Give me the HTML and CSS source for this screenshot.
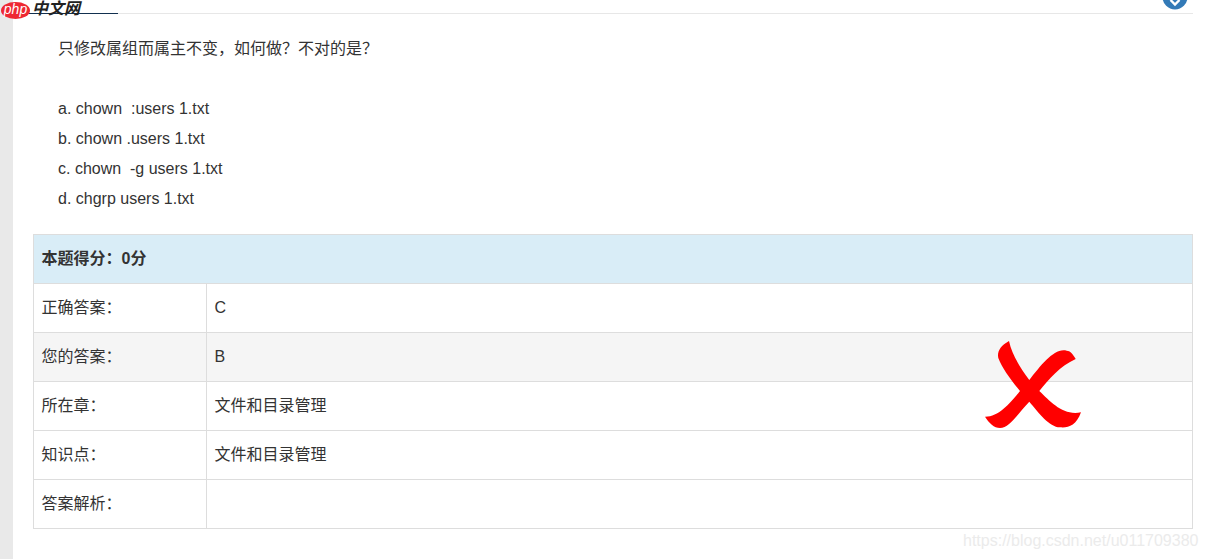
FILE: index.html
```html
<!DOCTYPE html>
<html>
<head>
    <meta charset="utf-8">
    <link rel="stylesheet" href="styles.css">
</head>
<body>
    <div class="page">
        <div class="side"></div>
        <div class="main">
            <div class="tabs">
                <div class="tab"></div>
            </div>
            <div class="question">
                <p>只修改属组而属主不变，如何做？不对的是？</p>
                <p>&nbsp;</p>
                <p>a. chown &nbsp;:users 1.txt</p>
                <p>b. chown .users 1.txt</p>
                <p>c. chown &nbsp;-g users 1.txt</p>
                <p>d. chgrp users 1.txt</p>
            </div>
            <table class="result">
                <colgroup>
                    <col class="label-col">
                    <col>
                </colgroup>
                <tr class="score">
                    <th colspan="2">本题得分：0分</th>
                </tr>
                <tr>
                    <td>正确答案：</td>
                    <td>C</td>
                </tr>
                <tr class="alt">
                    <td>您的答案：</td>
                    <td>B</td>
                </tr>
                <tr>
                    <td>所在章：</td>
                    <td>文件和目录管理</td>
                </tr>
                <tr>
                    <td>知识点：</td>
                    <td>文件和目录管理</td>
                </tr>
                <tr>
                    <td>答案解析：</td>
                    <td></td>
                </tr>
            </table>
        </div>
    </div>

    <div class="logo">
        <span class="logo-php">php</span>
        <span class="logo-name">中文网</span>
    </div>

    <svg class="top-badge" width="26" height="12" viewBox="0 0 26 12">
        <circle cx="13" cy="-3" r="12.5" fill="#337ab7"/>
        <path d="M8.500 0 L13 4.500 L17.500 0" fill="none" stroke="#fff" stroke-width="2.400"/>
    </svg>

    <svg class="wrong-mark" width="97" height="88" viewBox="0 0 97 88">
        <path fill="#f00" d="M24 0 C15 5 12 11 13.300 17 C17 27 26 39 35 50 C26 61 14 76 0 75.700 C4 82 9 87 15 87 C25 87 34 71 44.300 60.700 C54 72 64 86 75 86.300 C83 87 91 85 96 71.300 C78 75 66 61 54.300 50 C64 38 75 25 90.700 18 C88 13 85 9.700 81.700 9.700 C70 6 56 24 44.300 39 C36 28 27 14 24 0 Z"/>
    </svg>

    <div class="watermark">https://blog.csdn.net/u011709380</div>
</body>
</html>
```

FILE: styles.css
```css
html, body
{
    margin: 0;
    height: 100%;
    overflow: hidden;
    background-color: #fff;
}
body
{
    font-family: "Liberation Sans", "Noto Sans CJK SC", sans-serif;
    font-size: 16px;
    color: #333;
}
.page
{
    display: flex;
    height: 559px;
}
.side
{
    width: 13px;
    flex-shrink: 0;
    background-color: #e9e9e9;
}
.main
{
    width: 1180px;
}
.tabs
{
    height: 13px;
    border-bottom: 1px solid #e7e7e7;
}
.tab
{
    width: 90px;
    height: 13px;
    margin-left: 15px;
    border-bottom: 1px solid #12304f;
}
.question
{
    padding: 20px 0 20px 45px;
}
.question p
{
    margin: 0;
    line-height: 30px;
}
.result
{
    border-collapse: collapse;
    width: 1160px;
    margin-left: 20px;
    table-layout: fixed;
}
.label-col
{
    width: 173px;
}
.result th, .result td
{
    height: 49px;
    padding: 0 8px 0 7.500px;
    border: 1px solid #ddd;
    text-align: left;
    line-height: 20px;
    box-sizing: border-box;
}
.score th
{
    background-color: #d9edf7;
    font-weight: bold;
}
.alt td
{
    background-color: #f5f5f5;
}
.logo
{
    position: absolute;
    left: 1px;
    top: 2px;
    display: flex;
    align-items: flex-start;
}
.logo-php
{
    width: 29px;
    height: 17px;
    border-radius: 50%;
    background-color: #ee2833;
    color: #fff;
    font-size: 14px;
    font-style: italic;
    line-height: 15px;
    text-align: center;
}
.logo-name
{
    margin: -2px 0 0 2px;
    font-size: 16px;
    font-style: italic;
    font-weight: bold;
    line-height: 17px;
    color: #222;
}
.top-badge
{
    position: absolute;
    left: 1162px;
    top: 0;
}
.wrong-mark
{
    position: absolute;
    left: 985px;
    top: 341px;
}
.watermark
{
    position: absolute;
    left: 963px;
    top: 530px;
    font-size: 16px;
    line-height: 21px;
    color: #ebebeb;
}
```
